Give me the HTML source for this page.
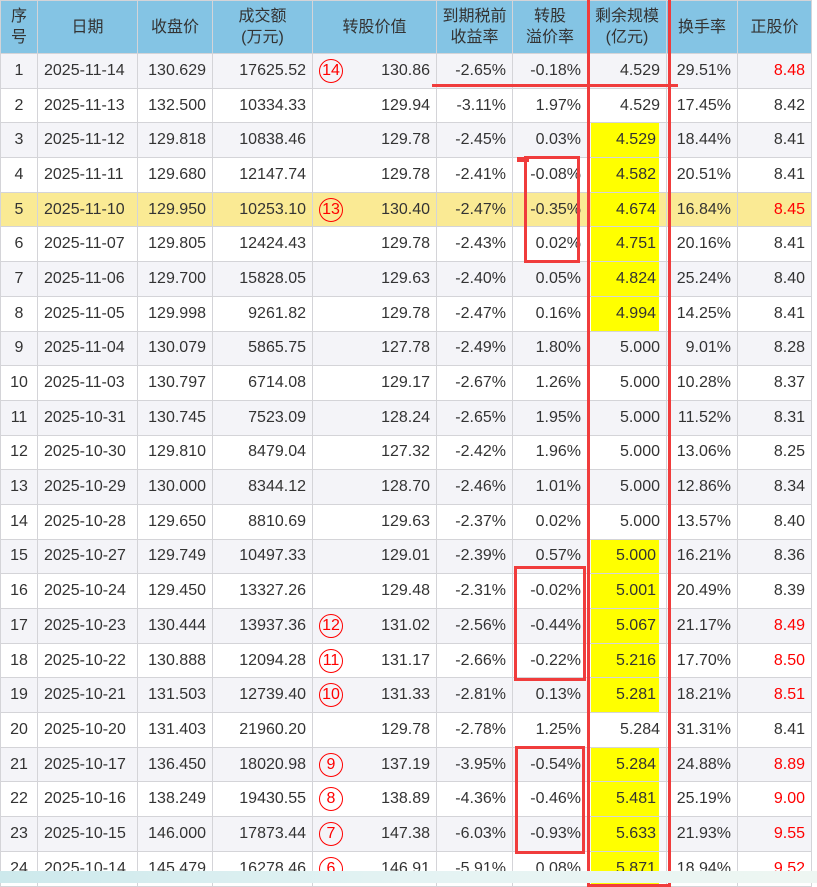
<!DOCTYPE html><html><head><meta charset="utf-8"><style>
*{margin:0;padding:0;box-sizing:border-box}
body{width:817px;height:883px;overflow:hidden;background:#fff;font-family:"Liberation Sans","Noto Sans CJK SC",sans-serif;color:#333;position:relative}
table{border-collapse:collapse;table-layout:fixed;position:absolute;left:0;top:0;width:811px}
td,th{border:1px solid #d4d4d8;font-size:16px;font-weight:normal;white-space:nowrap;padding:0 6px;text-align:right;height:34.7px}
th{background:#84c4e4;height:53px;text-align:center;line-height:21px;color:#333;padding:0}
tr:nth-child(even) td{background:#f4f4f8}
tr.hl td{background:#faea94 !important}
td.c{text-align:center;padding:0}
td.d{text-align:left;padding-left:6px}
td.y{position:relative;padding-right:10px}
td.y::before{content:"";position:absolute;left:3px;right:7px;top:0;bottom:0;background:#ffff00;z-index:0}
td.y span{position:relative}
td.v{position:relative}
.r{color:#f00}
.ci{position:absolute;left:6px;top:50%;margin-top:-12px;width:24px;height:24px;border:1px solid #f00;border-radius:50%;color:#f00;text-align:center;line-height:22px;font-size:16px}
.b{position:absolute;border:3px solid #f03c3c}
.l{position:absolute;background:#f03c3c}
.bar{position:absolute;left:0;top:871px;width:817px;height:12px;background:linear-gradient(90deg,#cde9ec,#e4f3f3,#eef6f2)}
</style></head><body>
<table>
<colgroup><col style="width:37px"><col style="width:100px"><col style="width:75px"><col style="width:100px"><col style="width:124px"><col style="width:76px"><col style="width:75px"><col style="width:79px"><col style="width:71px"><col style="width:74px"></colgroup>
<tr><th>序<br>号</th><th>日期</th><th>收盘价</th><th>成交额<br>(万元)</th><th>转股价值</th><th>到期税前<br>收益率</th><th>转股<br>溢价率</th><th>剩余规模<br>(亿元)</th><th>换手率</th><th>正股价</th></tr>
<tr><td class="c">1</td><td class="d">2025-11-14</td><td>130.629</td><td>17625.52</td><td class="v"><span class="ci">14</span>130.86</td><td>-2.65%</td><td>-0.18%</td><td>4.529</td><td>29.51%</td><td class="r">8.48</td></tr>
<tr><td class="c">2</td><td class="d">2025-11-13</td><td>132.500</td><td>10334.33</td><td>129.94</td><td>-3.11%</td><td>1.97%</td><td>4.529</td><td>17.45%</td><td>8.42</td></tr>
<tr><td class="c">3</td><td class="d">2025-11-12</td><td>129.818</td><td>10838.46</td><td>129.78</td><td>-2.45%</td><td>0.03%</td><td class="y"><span>4.529</span></td><td>18.44%</td><td>8.41</td></tr>
<tr><td class="c">4</td><td class="d">2025-11-11</td><td>129.680</td><td>12147.74</td><td>129.78</td><td>-2.41%</td><td>-0.08%</td><td class="y"><span>4.582</span></td><td>20.51%</td><td>8.41</td></tr>
<tr class="hl"><td class="c">5</td><td class="d">2025-11-10</td><td>129.950</td><td>10253.10</td><td class="v"><span class="ci">13</span>130.40</td><td>-2.47%</td><td>-0.35%</td><td class="y"><span>4.674</span></td><td>16.84%</td><td class="r">8.45</td></tr>
<tr><td class="c">6</td><td class="d">2025-11-07</td><td>129.805</td><td>12424.43</td><td>129.78</td><td>-2.43%</td><td>0.02%</td><td class="y"><span>4.751</span></td><td>20.16%</td><td>8.41</td></tr>
<tr><td class="c">7</td><td class="d">2025-11-06</td><td>129.700</td><td>15828.05</td><td>129.63</td><td>-2.40%</td><td>0.05%</td><td class="y"><span>4.824</span></td><td>25.24%</td><td>8.40</td></tr>
<tr><td class="c">8</td><td class="d">2025-11-05</td><td>129.998</td><td>9261.82</td><td>129.78</td><td>-2.47%</td><td>0.16%</td><td class="y"><span>4.994</span></td><td>14.25%</td><td>8.41</td></tr>
<tr><td class="c">9</td><td class="d">2025-11-04</td><td>130.079</td><td>5865.75</td><td>127.78</td><td>-2.49%</td><td>1.80%</td><td>5.000</td><td>9.01%</td><td>8.28</td></tr>
<tr><td class="c">10</td><td class="d">2025-11-03</td><td>130.797</td><td>6714.08</td><td>129.17</td><td>-2.67%</td><td>1.26%</td><td>5.000</td><td>10.28%</td><td>8.37</td></tr>
<tr><td class="c">11</td><td class="d">2025-10-31</td><td>130.745</td><td>7523.09</td><td>128.24</td><td>-2.65%</td><td>1.95%</td><td>5.000</td><td>11.52%</td><td>8.31</td></tr>
<tr><td class="c">12</td><td class="d">2025-10-30</td><td>129.810</td><td>8479.04</td><td>127.32</td><td>-2.42%</td><td>1.96%</td><td>5.000</td><td>13.06%</td><td>8.25</td></tr>
<tr><td class="c">13</td><td class="d">2025-10-29</td><td>130.000</td><td>8344.12</td><td>128.70</td><td>-2.46%</td><td>1.01%</td><td>5.000</td><td>12.86%</td><td>8.34</td></tr>
<tr><td class="c">14</td><td class="d">2025-10-28</td><td>129.650</td><td>8810.69</td><td>129.63</td><td>-2.37%</td><td>0.02%</td><td>5.000</td><td>13.57%</td><td>8.40</td></tr>
<tr><td class="c">15</td><td class="d">2025-10-27</td><td>129.749</td><td>10497.33</td><td>129.01</td><td>-2.39%</td><td>0.57%</td><td class="y"><span>5.000</span></td><td>16.21%</td><td>8.36</td></tr>
<tr><td class="c">16</td><td class="d">2025-10-24</td><td>129.450</td><td>13327.26</td><td>129.48</td><td>-2.31%</td><td>-0.02%</td><td class="y"><span>5.001</span></td><td>20.49%</td><td>8.39</td></tr>
<tr><td class="c">17</td><td class="d">2025-10-23</td><td>130.444</td><td>13937.36</td><td class="v"><span class="ci">12</span>131.02</td><td>-2.56%</td><td>-0.44%</td><td class="y"><span>5.067</span></td><td>21.17%</td><td class="r">8.49</td></tr>
<tr><td class="c">18</td><td class="d">2025-10-22</td><td>130.888</td><td>12094.28</td><td class="v"><span class="ci">11</span>131.17</td><td>-2.66%</td><td>-0.22%</td><td class="y"><span>5.216</span></td><td>17.70%</td><td class="r">8.50</td></tr>
<tr><td class="c">19</td><td class="d">2025-10-21</td><td>131.503</td><td>12739.40</td><td class="v"><span class="ci">10</span>131.33</td><td>-2.81%</td><td>0.13%</td><td class="y"><span>5.281</span></td><td>18.21%</td><td class="r">8.51</td></tr>
<tr><td class="c">20</td><td class="d">2025-10-20</td><td>131.403</td><td>21960.20</td><td>129.78</td><td>-2.78%</td><td>1.25%</td><td>5.284</td><td>31.31%</td><td>8.41</td></tr>
<tr><td class="c">21</td><td class="d">2025-10-17</td><td>136.450</td><td>18020.98</td><td class="v"><span class="ci">9</span>137.19</td><td>-3.95%</td><td>-0.54%</td><td class="y"><span>5.284</span></td><td>24.88%</td><td class="r">8.89</td></tr>
<tr><td class="c">22</td><td class="d">2025-10-16</td><td>138.249</td><td>19430.55</td><td class="v"><span class="ci">8</span>138.89</td><td>-4.36%</td><td>-0.46%</td><td class="y"><span>5.481</span></td><td>25.19%</td><td class="r">9.00</td></tr>
<tr><td class="c">23</td><td class="d">2025-10-15</td><td>146.000</td><td>17873.44</td><td class="v"><span class="ci">7</span>147.38</td><td>-6.03%</td><td>-0.93%</td><td class="y"><span>5.633</span></td><td>21.93%</td><td class="r">9.55</td></tr>
<tr><td class="c">24</td><td class="d">2025-10-14</td><td>145.479</td><td>16278.46</td><td class="v"><span class="ci">6</span>146.91</td><td>-5.91%</td><td>0.08%</td><td class="y"><span>5.871</span></td><td>18.94%</td><td class="r">9.52</td></tr>
</table>
<div class="b" style="left:587px;top:-3px;width:84px;height:890px"></div>
<div class="l" style="left:432px;top:84px;width:246px;height:3px"></div>
<div class="b" style="left:524px;top:156px;width:56px;height:107px"></div>
<div class="l" style="left:517px;top:157px;width:12px;height:5px"></div>
<div class="b" style="left:514px;top:566px;width:72px;height:115px"></div>
<div class="b" style="left:515px;top:746px;width:70px;height:108px"></div>
<div class="bar"></div>
</body></html>
